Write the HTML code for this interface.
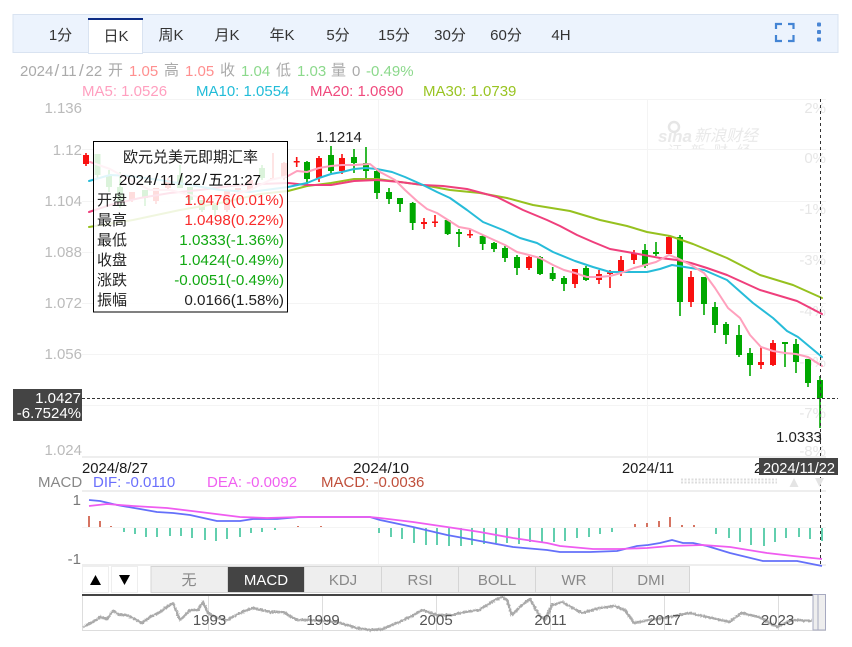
<!DOCTYPE html>
<html>
<head>
<meta charset="utf-8">
<title>欧元兑美元即期汇率</title>
<style>
html,body{margin:0;padding:0;background:#fff;}
svg{display:block;}
text{font-family:"Liberation Sans","Noto Sans CJK SC",sans-serif;font-size:15px;}
.sl{font-size:17px;}
</style>
</head>
<body>
<svg width="852" height="647" viewBox="0 0 852 647" xmlns="http://www.w3.org/2000/svg">
<defs>
<clipPath id="wm"><rect x="650" y="115" width="120" height="34"/></clipPath>
<filter id="rough" x="-5%" y="-30%" width="110%" height="160%" color-interpolation-filters="sRGB">
<feTurbulence type="fractalNoise" baseFrequency="0.6" numOctaves="2" seed="3"/>
<feDisplacementMap in="SourceGraphic" scale="3" xChannelSelector="R" yChannelSelector="G"/>
</filter>
</defs>
<rect width="852" height="647" fill="#fff"/>

<!-- toolbar -->
<rect x="13" y="14.5" width="825" height="38" fill="#ecf3fd" stroke="#d9e3f1" stroke-width="1"/>
<rect x="88.5" y="19" width="54" height="34.5" fill="#fff" stroke="#d9e3f1"/>
<rect x="88" y="18" width="55" height="2" fill="#0d2c84"/>
<g fill="#333" text-anchor="middle">
<text x="60.5" y="40">1分</text><text x="116" y="41">日K</text><text x="171" y="40">周K</text><text x="227" y="40">月K</text><text x="282" y="40">年K</text><text x="338" y="40">5分</text><text x="394" y="40">15分</text><text x="450" y="40">30分</text><text x="506" y="40">60分</text><text x="561" y="40">4H</text>
</g>
<path d="M776 29V24H782M788 24H793.5V29M776 35V41H782M788 41H793.5V35" fill="none" stroke="#4384d4" stroke-width="2.2"/>
<g fill="#4a86d4"><rect x="817" y="22.5" width="4" height="4" rx="1"/><rect x="817" y="30" width="4" height="4" rx="1"/><rect x="817" y="37.5" width="4" height="4" rx="1"/></g>

<!-- legend -->
<text y="76" fill="#aaa"><tspan x="20">2024</tspan><tspan x="54.500" class="sl">/</tspan><tspan x="61">11</tspan><tspan x="79" class="sl">/</tspan><tspan x="85.500">22</tspan></text>
<text x="108" y="75" fill="#aaa">开</text><text x="129" y="76" fill="#ff8f8f">1.05</text>
<text x="164" y="75" fill="#aaa">高</text><text x="185" y="76" fill="#ff8f8f">1.05</text>
<text x="220" y="75" fill="#aaa">收</text><text x="241" y="76" fill="#8cd98c">1.04</text>
<text x="276" y="75" fill="#aaa">低</text><text x="297" y="76" fill="#8cd98c">1.03</text>
<text x="331" y="75" fill="#aaa">量</text><text x="352" y="76" fill="#aaa">0</text><text x="366" y="76" fill="#8cd98c">-0.49%</text>
<text x="82" y="96" fill="#ff9fbf">MA5: 1.0526</text>
<text x="196" y="96" fill="#22bcd8">MA10: 1.0554</text>
<text x="310" y="96" fill="#f04a7d">MA20: 1.0690</text>
<text x="423" y="96" fill="#99c422">MA30: 1.0739</text>

<!-- grid -->
<g stroke="#f4f4f4" stroke-width="1" fill="none">
<path d="M82 99.5H826M82 149.5H826M82 201.5H826M82 252.5H826M82 303.5H826M82 354.5H826M82 405.5H826M82 457.5H826"/>
<path d="M82 491.5H826M82 527.5H826M82 565.5H826"/>
<path d="M378.5 99V565M647.5 99V565"/>
</g>
<g stroke="#eee" stroke-width="2" fill="none"><path d="M82 457H826M82 491H826M82 565H826"/></g>

<!-- axis labels -->
<g fill="#bbb" text-anchor="end">
<text x="82" y="113">1.136</text><text x="82" y="155">1.12</text><text x="82" y="206">1.104</text><text x="82" y="257">1.088</text><text x="82" y="308">1.072</text><text x="82" y="359">1.056</text><text x="82" y="455">1.024</text>
</g>
<g fill="#e6e6e6" text-anchor="end">
<text x="826" y="113">2%</text><text x="826" y="163">0%</text><text x="826" y="214">-1%</text><text x="826" y="265">-3%</text><text x="826" y="316">-4%</text><text x="826" y="367">-6%</text><text x="826" y="418">-7%</text><text x="826" y="456">-8%</text>
</g>

<!-- watermark -->
<g clip-path="url(#wm)" fill="#e9e9e9">
<circle cx="674" cy="127" r="5" fill="none" stroke="#e6e6e6" stroke-width="2.5"/>
<text x="658" y="142" style="font-size:17px;font-weight:bold;font-style:italic">sina</text>
<text x="694" y="141" style="font-size:16px;font-style:italic">新浪财经</text>
<text x="668" y="156" style="font-size:14px;letter-spacing:9px">证新财经</text>
</g>

<!-- candles -->
<g fill="none">
<path stroke="#f91010" stroke-width="1.6" d="M86 153V166M132 192V202M156 188V204M168 178V190M227 190V212M238 188V192M250 178V192M273 153V180M284 162V180M296.7 157V167M319 156V182M342 154V174M424 218V229M435 215V227M470 230V238M529 256V270M575 269V288M599 270V284M610 270V288M621 256V276M634 250V264M669 235V254M691 271V307M761 347V369M773 340V366"/>
<path stroke="#f91010" stroke-width="6" d="M86 155V164M132 192V200M156 188V201M168 180V188M227 190V210M238 188V190M250 180V190M273 178V179.5M284 163V178M296.7 161V162.5M319 158V178M342 158V171M424 222V224M435 221.500V223M470 234V235.500M529 257V268M575 269V284M599 274V280M610 272.500V274M621 260V272M634 253V260M669 237V254M691 277V302M761 362V365M773 343V365"/>
<path stroke="#00a800" stroke-width="1.6" d="M97.500 154V178M109 170V192M120 172V208M145 190V206M180 165V188M190 187V205M202 200V212M215 205V216M262 165V180M307 161V187M331 146V173M354 149V173M366 147V178M377 168V199M389 188V204M400 198V212M412.700 202V230M447.700 219V235M459 229V247M482.700 235V250M494 242V252M505 246V262M517 255V275M540 256V275M552.700 267V281M564 276V291M586 266V281M645 244V268M656 242V256M680 235V316M704 277V315M715 302V333M726 322V344M739 325V357M750 348V376M785 342V367M796 339V373M808 359V387M820 376V428"/>
<path stroke="#00a800" stroke-width="6" d="M97.500 154V175M109 175V187M120 187V206M145 190V198M180 175V188M190 187V200M202 200V210M215 205V210M262 168V178M307 162V179M331 155V171M354 157V163M366 163V171M377 171V193M389 192V199M400 198V204M412.700 203V223M447.700 220V234M459 232V234M482.700 236V244M494 243V249M505 248V258M517 257V268M540 257V274M552.700 273V279M564 278V284M586 268V280M645 250V266M656 252V254M680 237V302M704 277V304M715 307V325M726 324V335M739 335V355M750 353V365M785 342V344M796 344V362M808 359V383M820 380V398"/>
</g>

<!-- MA lines -->
<g fill="none" stroke-width="2" stroke-linejoin="round" stroke-linecap="round">
<polyline stroke="#96c11f" points="89,227 133,220 180,210 220,203 260,194 288,191 307,186 331,183 354,179 377,179 400,182 423,185 450,190 480,193 507,198 533,205 570,211 600,220 627,226 647,232 670,236 693,244 727,258 760,275 793,285 822,298"/>
<polyline stroke="#ef3f7c" points="89,212 110,205 140,198 170,193 200,190 230,186 260,184 288,183 307,185 331,185 354,181 377,180 400,182 423,185 443,186 467,189 497,197 523,210 547,220 560,226 577,235 593,242 610,249 633,253 660,258 677,260 691,263 707,268 727,275 760,290 797,301 822,314"/>
<polyline stroke="#27bcd9" points="89,181 110,175 130,176 160,180 190,185 220,190 250,192 288,187 307,183 319,178 331,174 342,172 354,169 366,168 377,169 392,172 405,177 423,185 437,192 450,198 467,210 483,222 503,230 520,238 537,243 553,252 575,261 593,267 610,272 627,272 647,272 660,269 672,265 691,268 704,270 727,280 753,303 773,318 787,331 798,337 822,357"/>
<polyline stroke="#ffa0bd" points="90,162 110,169 130,180 150,190 170,190 190,195 210,200 230,195 250,190 270,180 288,176 297,171 307,172 319,168 331,166 342,165 354,165 370,164 380,172 395,180 405,190 417,201 427,209 437,213 448,220 459,227 470,229 483,235 494,240 505,245 517,252 529,255 540,258 553,265 564,270 575,273 587,277 599,277 610,276 621,273 634,268 645,265 656,262 669,255 677,258 691,265 704,273 715,288 728,308 740,318 750,335 761,347 773,351 785,353 796,354 808,357 822,366"/>
</g>

<!-- crosshair -->
<path d="M82 398.500H838" stroke="#333" stroke-dasharray="3 2" fill="none"/>
<path d="M820.500 99V566" stroke="#333" stroke-dasharray="3 3" fill="none"/>

<text x="316" y="142" fill="#222">1.1214</text>
<text x="776" y="442" fill="#222">1.0333</text>

<rect x="13" y="389" width="69" height="32" fill="#444"/>
<text x="81" y="403" text-anchor="end" fill="#fff">1.0427</text>
<text x="81" y="418" text-anchor="end" fill="#fff">-6.7524%</text>

<!-- date axis -->
<g fill="#1a1a1a">
<text x="82" y="473" textLength="66" lengthAdjust="spacingAndGlyphs">2024/8/27</text>
<text x="353" y="473" textLength="56" lengthAdjust="spacingAndGlyphs">2024/10</text>
<text x="622" y="473" textLength="52" lengthAdjust="spacingAndGlyphs">2024/11</text>
<text x="754" y="473" textLength="70" lengthAdjust="spacingAndGlyphs">2024/11/22</text>
</g>
<rect x="759" y="458" width="79" height="17" fill="#444"/>
<text x="763" y="473" fill="#fff" textLength="72" lengthAdjust="spacingAndGlyphs">2024/11/22</text>
<path d="M681 479.500H777M681 482.500H777" stroke="#ddd" stroke-width="2" stroke-dasharray="2 1.500" fill="none"/>
<path d="M794 478L798.500 487H789.500Z" fill="#e4e4e4"/>
<path d="M815 478H824L819.500 487Z" fill="#e4e4e4"/>

<!-- MACD legend -->
<text x="38" y="487" fill="#888">MACD</text>
<text x="93" y="487" fill="#6a6ffc">DIF: -0.0110</text>
<text x="207" y="487" fill="#f060f0">DEA: -0.0092</text>
<text x="321" y="487" fill="#c0503c">MACD: -0.0036</text>
<text x="81" y="505" text-anchor="end" fill="#777">1</text>
<text x="81" y="564" text-anchor="end" fill="#777">-1</text>

<!-- histogram -->
<path fill="none" stroke="#c8472e" stroke-width="1.500" d="M89 516V527M100 521V527M111 526V527M298 526V527M321 526V527M635 524V527M647 523V527M659 521V527M670 517V527M682 525V527M694 525V527"/>
<path fill="none" stroke="#2fbf94" stroke-width="1.500" d="M124 528V532M135 528V534M146 528V537M157 528V537M170 528V536M181 528V536M192 528V538M205 528V540M216 528V541M227 528V539M240 528V537M251 528V533M262 528V532M275 528V530M379 528V533M391 528V537M402 528V539M414 528V543M426 528V545M437 528V545M449 528V546M461 528V546M472 528V545M484 528V544M496 528V543M507 528V543M519 528V544M530 528V542M542 528V542M554 528V542M565 528V541M577 528V538M589 528V537M600 528V534M612 528V532M716 528V534M729 528V538M740 528V542M751 528V545M764 528V546M775 528V542M786 528V538M799 528V537M810 528V539M822 528V541"/>

<!-- MACD lines -->
<g fill="none" stroke-width="1.800" stroke-linejoin="round">
<polyline stroke="#6470fa" points="89,500 100,501 117,505 140,509 157,512 173,513 190,515 217,521 240,521 253,519 277,519 300,517 320,517 370,517 380,520 413,527 447,535 480,541 513,547 547,550 560,552 590,552 617,551 637,546 648,545 660,543 672,540 683,543 693,543 707,546 730,553 763,561 797,561 822,566"/>
<polyline stroke="#ef5cf0" points="89,506 107,504 133,506 167,508 200,512 240,517 267,518 300,517 320,517 370,517 380,518 413,522 447,527 480,532 513,538 547,543 560,546 593,549 620,549 647,548 670,546 703,545 730,547 767,553 793,556 822,559"/>
</g>

<!-- indicator buttons -->
<rect x="82.500" y="566.500" width="26" height="26" fill="#fff" stroke="#eee"/>
<rect x="111.500" y="566.500" width="26" height="26" fill="#fff" stroke="#eee"/>
<path d="M95.500 575L101 585H90Z" fill="#000"/>
<path d="M119 575H130L124.500 585Z" fill="#000"/>
<g fill="#eee" stroke="#d5d5d5">
<rect x="151" y="566.500" width="76.700" height="26"/><rect x="304.500" y="566.500" width="77" height="26"/><rect x="381.500" y="566.500" width="77" height="26"/><rect x="458.500" y="566.500" width="77" height="26"/><rect x="535.500" y="566.500" width="77" height="26"/><rect x="612.500" y="566.500" width="77" height="26"/>
</g>
<rect x="227.500" y="566.500" width="77" height="26" fill="#444" stroke="#d5d5d5"/>
<g text-anchor="middle" fill="#888">
<text x="189" y="585">无</text><text x="343" y="585">KDJ</text><text x="420" y="585">RSI</text><text x="497" y="585">BOLL</text><text x="574" y="585">WR</text><text x="651" y="585">DMI</text>
</g>
<text x="266" y="585" text-anchor="middle" fill="#fff">MACD</text>

<!-- navigator -->
<path d="M82.500 595V630.500H826M208.500 595V630M322.500 595V630M436.500 595V630M550.500 595V630M664.500 595V630M778.500 595V630" stroke="#ddd" fill="none"/>
<polyline filter="url(#rough)" fill="none" stroke="#aaa" stroke-width="2.600" stroke-linejoin="round" points="83,627 93,622 100,617 107,619 113,611 120,615 127,615 142,623 150,617 160,612 170,605 173,603 180,620 190,610 198,610 203,602 208,613 217,618 227,620 240,613 253,608 270,612 283,612 297,620 310,620 337,622 357,628 370,630 383,629 397,623 410,617 422,610 437,615 452,615 465,612 479,610 495,600 502,597 507,600 512,615 522,605 530,599 539,615 545,620 552,605 562,602 582,613 599,608 615,606 625,610 634,623 649,620 665,618 689,613 712,618 729,622 742,613 759,617 777,627 792,620 812,621"/>
<rect x="82" y="594" width="731" height="2" fill="#444"/>
<g fill="#555" text-anchor="middle">
<text x="209.500" y="625">1993</text><text x="323" y="625">1999</text><text x="436" y="625">2005</text><text x="550.500" y="625">2011</text><text x="664" y="625">2017</text><text x="777.500" y="625">2023</text>
</g>
<rect x="813" y="594.500" width="5" height="35.500" fill="#eee" stroke="#a6a9c0"/>
<rect x="818" y="594.500" width="7.500" height="35.500" fill="#eee" stroke="#a6a9c0"/>

<!-- tooltip -->
<rect x="93.500" y="141.500" width="194" height="170.500" fill="#fff" fill-opacity=".86" stroke="#000"/>
<text x="190.500" y="162" text-anchor="middle" fill="#222">欧元兑美元即期汇率</text>
<text y="185" fill="#111"><tspan x="119">2024</tspan><tspan x="153.500" class="sl">/</tspan><tspan x="160">11</tspan><tspan x="178" class="sl">/</tspan><tspan x="184.200">22</tspan><tspan x="202.200" class="sl">/</tspan><tspan x="208.400">五</tspan><tspan x="223.400">21:27</tspan></text>
<g fill="#222">
<text x="97" y="205">开盘</text><text x="97" y="225">最高</text><text x="97" y="245">最低</text><text x="97" y="265">收盘</text><text x="97" y="285">涨跌</text><text x="97" y="305">振幅</text>
</g>
<g text-anchor="end" style="font-size:15.200px">
<text x="284" y="205" fill="#f92a2a" style="font-size:15.200px">1.0476(0.01%)</text>
<text x="284" y="225" fill="#f92a2a" style="font-size:15.200px">1.0498(0.22%)</text>
<text x="284" y="245" fill="#12a812" style="font-size:15.200px">1.0333(-1.36%)</text>
<text x="284" y="265" fill="#12a812" style="font-size:15.200px">1.0424(-0.49%)</text>
<text x="284" y="285" fill="#12a812" style="font-size:15.200px">-0.0051(-0.49%)</text>
<text x="284" y="305" fill="#222" style="font-size:15.200px">0.0166(1.58%)</text>
</g>
</svg>
</body>
</html>
